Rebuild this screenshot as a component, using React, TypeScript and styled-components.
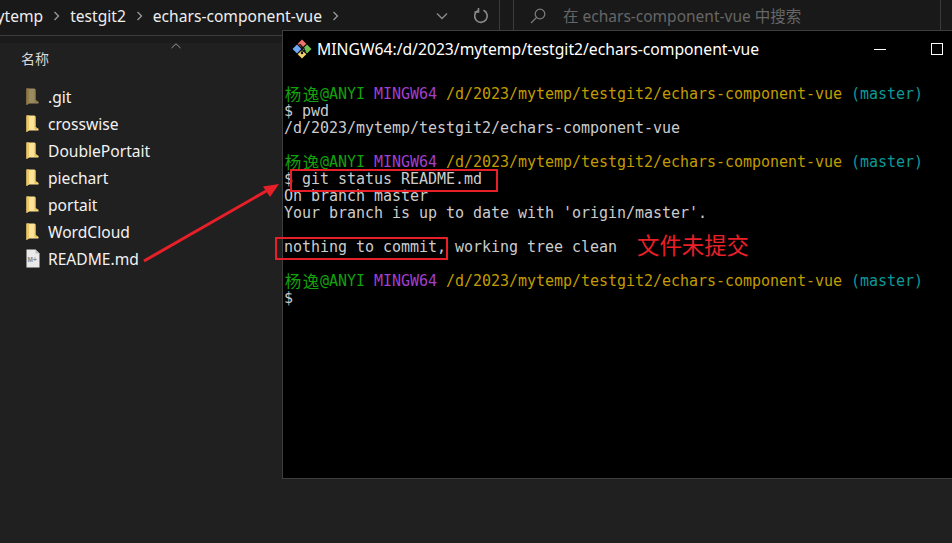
import React from "react";
import styled, { createGlobalStyle } from "styled-components";

const Global = createGlobalStyle`
  html, body { margin: 0; padding: 0; background: #202020; }
  body { width: 952px; height: 543px; overflow: hidden; }
  * { box-sizing: border-box; }
`;

const Page = styled.div`
  position: relative;
  width: 952px;
  height: 543px;
  overflow: hidden;
  background: #202020;
  color: #f0f0f0;
  font-family: "Noto Sans", "Noto Sans CJK SC", sans-serif;
  display: flex;
  flex-direction: column;
`;

const Toolbar = styled.div`
  height: 36px;
  flex: none;
  display: flex;
  align-items: stretch;
  background: #191919;
  border-bottom: 1px solid #3b3b3b;
`;

const Breadcrumbs = styled.div`
  width: 430px;
  flex: none;
  display: flex;
  align-items: center;
  gap: 10px;
  overflow: hidden;
  padding-bottom: 4px;
`;

const Crumb = styled.span<{ $clip?: boolean }>`
  font-size: 15.6px;
  color: #eeeeee;
  white-space: nowrap;
  margin-left: ${(p) => (p.$clip ? "-18px" : "0")};
`;

const HistoryArea = styled.div`
  width: 69px;
  flex: none;
  display: flex;
  align-items: center;
  padding-left: 6px;
  gap: 25px;
  padding-bottom: 4px;
`;

const Divider = styled.div`
  width: 1px;
  flex: none;
  background: #3b3b3b;
`;

const Gap = styled.div`
  width: 13px;
  flex: none;
`;

const SearchBox = styled.div`
  width: 426px;
  flex: none;
  display: flex;
  align-items: center;
  padding: 0 0 4px 16px;
  gap: 17px;
`;

const SearchHint = styled.span`
  font-size: 15.5px;
  color: #666666;
  white-space: nowrap;
`;

const HeaderBand = styled.div`
  height: 7px;
  flex: none;
  background: #1b1b1b;
`;

const Explorer = styled.div`
  flex: 1;
  background: #202020;
  padding-left: 21px;
  position: relative;
`;

const ColumnTitle = styled.div`
  font-size: 14px;
  line-height: 20px;
  height: 20px;
  margin-top: 6px;
  color: #d8d8d8;
`;

const SortCaret = styled.svg`
  position: absolute;
  left: 171px;
  top: 0;
`;

const FileList = styled.ul`
  list-style: none;
  margin: 14px 0 0 5px;
  padding: 0;
`;

const FileRow = styled.li`
  height: 27px;
  display: flex;
  align-items: center;
  gap: 8px;
  font-size: 15.6px;
  color: #f2f2f2;
  white-space: nowrap;
`;

const Term = styled.section`
  position: absolute;
  left: 282px;
  top: 30px;
  width: 680px;
  height: 449px;
  background: #000;
  border: 1px solid #3e3e3e;
  border-right: none;
  display: flex;
  flex-direction: column;
`;

const TitleBar = styled.header`
  height: 36px;
  flex: none;
  display: flex;
  align-items: center;
  padding-left: 9px;
  gap: 5px;
  color: #ffffff;
  font-size: 15.7px;
  white-space: nowrap;
`;

const TitleText = styled.span`
  width: 552px;
  flex: none;
`;

const WinButtons = styled.div`
  display: flex;
  align-items: center;
  gap: 45px;
`;

const Minimize = styled.span`
  width: 12px;
  height: 1px;
  background: #fff;
`;

const Maximize = styled.span`
  width: 12px;
  height: 12px;
  border: 1px solid #fff;
`;

const Console = styled.pre`
  margin: 19px 0 0;
  padding: 0 0 0 1px;
  font-family: "DejaVu Sans Mono", "Liberation Mono", "Noto Sans CJK SC", monospace;
  font-size: 15px;
  letter-spacing: -0.03px;
  line-height: 17px;
  color: #cccccc;
`;

const Line = styled.div`
  height: 17px;
  white-space: pre;
`;

const Cjk = styled.span`
  display: inline-block;
  width: 18px;
  text-align: center;
  font-family: "Noto Sans CJK SC", sans-serif;
  font-size: 16.5px;
  line-height: 17px;
  vertical-align: top;
`;

const Tone = styled.span<{ $c: string }>`
  color: ${(p) => p.$c};
`;

const Highlight = styled.div<{ $x: number; $y: number; $w: number; $h: number }>`
  position: absolute;
  left: ${(p) => p.$x}px;
  top: ${(p) => p.$y}px;
  width: ${(p) => p.$w}px;
  height: ${(p) => p.$h}px;
  border: 2px solid #e71f28;
`;

const Note = styled.div`
  position: absolute;
  left: 637px;
  top: 229px;
  font-family: "Noto Sans CJK SC", sans-serif;
  font-size: 22.4px;
  line-height: 30px;
  color: #ea1f28;
  white-space: nowrap;
`;

const ArrowLayer = styled.svg`
  position: absolute;
  left: 0;
  top: 0;
  pointer-events: none;
`;

const Chevron = () => (
  <svg width="7" height="10" viewBox="0 0 7 10" fill="none" stroke="#9a9a9a" strokeWidth="1.3">
    <path d="M1.5 1l4 4-4 4" />
  </svg>
);

const Folder = ({ dim }: { dim?: boolean }) => (
  <svg width="14" height="17" viewBox="0 0 14 17">
    <g opacity={dim ? 0.55 : 1}>
      <path d="M.5 .5H8.500L9.500 1.500V12L12.500 14V15.500H3L.5 17z" fill="#fbe39a" />
      <path d="M.5 .5H3V15.500L.5 17z" fill="#efc65f" />
      <path d="M9.500 1.500V12L12.500 14L10.500 14.500H8.500V1.500z" fill="#e9bb50" />
    </g>
  </svg>
);

const MdFile = () => (
  <svg width="14" height="19" viewBox="0 0 14 19">
    <path d="M.5 .5h9l4 4v14H.5z" fill="#e9e9e9" />
    <path d="M9.500 .5V4.500h4z" fill="#bdbdbd" />
    <text x="1.500" y="13" fontSize="6.500" fontWeight="700" fontFamily="Liberation Sans, sans-serif" fill="#8a8a8a">M+</text>
  </svg>
);

const GitLogo = () => (
  <svg width="20" height="20" viewBox="0 0 20 20">
    <path d="M10 .5l4.300 4.300-4.300 4.300-4.300-4.300z" fill="#f0716a" />
    <path d="M15 5.500L19.500 10 15 14.500 10.700 10z" fill="#6fbf50" />
    <path d="M10 10.900l4.300 4.300L10 19.500l-4.300-4.300z" fill="#f2d36b" />
    <path d="M5 5.500L9.300 10 5 14.500.5 10z" fill="#6fa8f5" />
    <path d="M7.500 5l5 5M10 8v6M12.500 10.500v2" stroke="#111" strokeWidth="1.100" fill="none" />
    <circle cx="10" cy="14" r="1.300" fill="#111" />
    <circle cx="12.500" cy="12" r="1.200" fill="#111" />
  </svg>
);

const entries = [
  { name: ".git", dim: true },
  { name: "crosswise" },
  { name: "DoublePortait" },
  { name: "piechart" },
  { name: "portait" },
  { name: "WordCloud" },
];

const Prompt = () => (
  <Line>
    <Tone $c="#13a10e"><Cjk>杨</Cjk><Cjk>逸</Cjk>@ANYI </Tone>
    <Tone $c="#a23fd0">MINGW64 </Tone>
    <Tone $c="#c19c00">/d/2023/mytemp/testgit2/echars-component-vue </Tone>
    <Tone $c="#0a9a9a">(master)</Tone>
  </Line>
);

export default function App() {
  return (
    <Page>
      <Global />
      <Toolbar>
        <Breadcrumbs>
          <Crumb $clip>mytemp</Crumb>
          <Chevron />
          <Crumb>testgit2</Crumb>
          <Chevron />
          <Crumb>echars-component-vue</Crumb>
          <Chevron />
        </Breadcrumbs>
        <HistoryArea>
          <svg width="12" height="8" viewBox="0 0 12 8" fill="none" stroke="#8a8a8a" strokeWidth="1.400">
            <path d="M1 1.500l5 5 5-5" />
          </svg>
          <svg width="16" height="16" viewBox="0 0 16 16" fill="none" stroke="#8a8a8a" strokeWidth="1.600">
            <path d="M10.500 2.300A6.300 6.300 0 1 1 5 2.500" />
            <path d="M5.500 0v4H1.500" />
          </svg>
        </HistoryArea>
        <Divider />
        <Gap />
        <Divider />
        <SearchBox>
          <svg width="16" height="16" viewBox="0 0 16 16" fill="none" stroke="#7a7a7a" strokeWidth="1.300">
            <circle cx="10" cy="6" r="4.800" />
            <path d="M6.500 9.500L1 15" />
          </svg>
          <SearchHint>在 echars-component-vue 中搜索</SearchHint>
        </SearchBox>
        <Divider />
      </Toolbar>
      <HeaderBand />
      <Explorer>
        <SortCaret width="10" height="6" viewBox="0 0 10 6" fill="none" stroke="#9a9a9a">
          <path d="M.5 5L5 .8 9.500 5" />
        </SortCaret>
        <ColumnTitle>名称</ColumnTitle>
        <FileList>
          {entries.map((e) => (
            <FileRow key={e.name}>
              <Folder dim={e.dim} />
              {e.name}
            </FileRow>
          ))}
          <FileRow>
            <MdFile />
            README.md
          </FileRow>
        </FileList>
      </Explorer>

      <Term>
        <TitleBar>
          <GitLogo />
          <TitleText>MINGW64:/d/2023/mytemp/testgit2/echars-component-vue</TitleText>
          <WinButtons>
            <Minimize />
            <Maximize />
          </WinButtons>
        </TitleBar>
        <Console>
          <Prompt />
          <Line>$ pwd</Line>
          <Line>/d/2023/mytemp/testgit2/echars-component-vue</Line>
          <Line />
          <Prompt />
          <Line>$ git status README.md</Line>
          <Line>On branch master</Line>
          <Line>Your branch is up to date with 'origin/master'.</Line>
          <Line />
          <Line>nothing to commit, working tree clean</Line>
          <Line />
          <Prompt />
          <Line>$</Line>
        </Console>
      </Term>

      <Highlight $x={290} $y={169} $w={208} $h={23} />
      <Highlight $x={275} $y={237} $w={173} $h={23} />
      <Note>文件未提交</Note>
      <ArrowLayer width="952" height="543" viewBox="0 0 952 543">
        <path d="M144 261L268 190" stroke="#e71f28" strokeWidth="3" fill="none" />
        <path d="M279 184L263 186.500 270 197z" fill="#e71f28" />
      </ArrowLayer>
    </Page>
  );
}
